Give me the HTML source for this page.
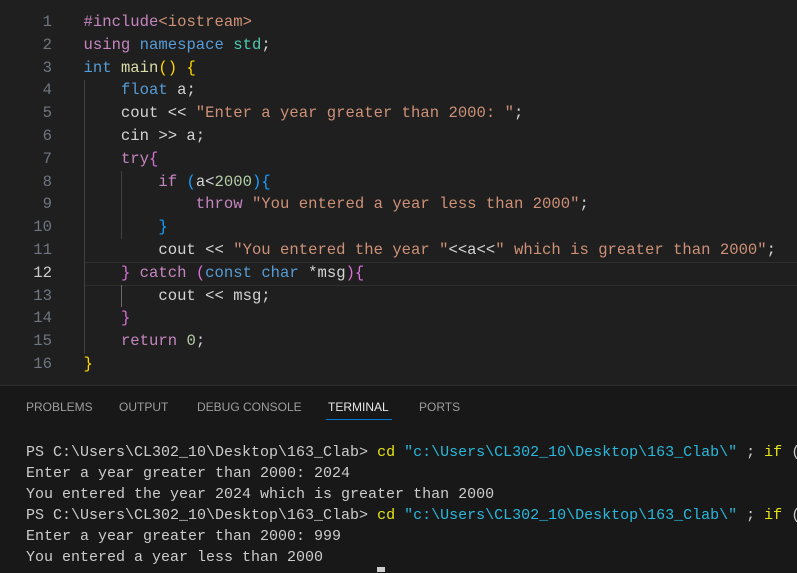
<!DOCTYPE html>
<html><head><style>
body{margin:0;width:797px;height:572px;background:#1f1f1f;overflow:hidden;position:relative;font-family:"Liberation Mono",monospace}
.ln{position:absolute;left:0;width:52px;text-align:right;color:#6e7681;font-size:15.6px;line-height:22.8px}
.code{position:absolute;left:83.5px;font-size:15.6px;line-height:22.8px;color:#d4d4d4;white-space:pre}
.k{color:#c586c0}.b{color:#569cd6}.s{color:#ce9178}.f{color:#dcdcaa}.t{color:#4ec9b0}.n{color:#b5cea8}.v{color:#9cdcfe}
.y{color:#ffd700}.p{color:#da70d6}.bl{color:#179fff}
.hl{position:absolute;left:84px;right:0;top:262px;height:22px;border-top:1px solid #2e2e2e;border-bottom:1px solid #2e2e2e}
.guide{position:absolute;width:1px;background:#404040}
.panel{position:absolute;left:0;top:385px;width:797px;height:187px;background:#181818;border-top:1px solid #2b2b2b}
.tabs{position:absolute;top:400px;font-family:"Liberation Sans",sans-serif;font-size:12px;color:#9d9d9d}
.tabs span{position:absolute;white-space:nowrap}
.term{position:absolute;left:26px;top:442px;font-size:15px;line-height:21px;color:#cccccc;white-space:pre}
.cy{color:#e5e510}.cs{color:#29b8db}
</style></head><body>
<div class="hl"></div>
<div class="guide" style="left:84px;top:80px;height:274px"></div>
<div class="guide" style="left:121px;top:171px;height:68px"></div>
<div class="guide" style="left:121px;top:285px;height:22px;background:#6a6a6a"></div>
<div class="ln" style="top:11px">1<br>2<br>3<br>4<br>5<br>6<br>7<br>8<br>9<br>10<br>11<br><span style="color:#ccc">12</span><br>13<br>14<br>15<br>16</div>
<div class="code" style="top:11px"><span class="k">#include</span><span class="s">&lt;iostream&gt;</span>
<span class="k">using</span> <span class="b">namespace</span> <span class="t">std</span>;
<span class="b">int</span> <span class="f">main</span><span class="y">()</span> <span class="y">{</span>
    <span class="b">float</span> a;
    cout &lt;&lt; <span class="s">"Enter a year greater than 2000: "</span>;
    cin &gt;&gt; a;
    <span class="k">try</span><span class="p">{</span>
        <span class="k">if</span> <span class="bl">(</span>a&lt;<span class="n">2000</span><span class="bl">){</span>
            <span class="k">throw</span> <span class="s">"You entered a year less than 2000"</span>;
        <span class="bl">}</span>
        cout &lt;&lt; <span class="s">"You entered the year "</span>&lt;&lt;a&lt;&lt;<span class="s">" which is greater than 2000"</span>;
    <span class="p">}</span> <span class="k">catch</span> <span class="p">(</span><span class="b">const</span> <span class="b">char</span> *msg<span class="p">){</span>
        cout &lt;&lt; msg;
    <span class="p">}</span>
    <span class="k">return</span> <span class="n">0</span>;
<span class="y">}</span></div>
<div class="panel"></div>
<div class="tabs"><span style="left:26px">PROBLEMS</span><span style="left:119px">OUTPUT</span><span style="left:197px">DEBUG CONSOLE</span><span style="left:328px;color:#e7e7e7">TERMINAL</span><span style="left:419px">PORTS</span></div>
<div style="position:absolute;left:326px;top:419px;width:66px;height:1px;background:#0078d4"></div>
<div class="term">PS C:\Users\CL302_10\Desktop\163_Clab&gt; <span class="cy">cd</span> <span class="cs">"c:\Users\CL302_10\Desktop\163_Clab\"</span> ; <span class="cy">if</span> (
Enter a year greater than 2000: 2024
You entered the year 2024 which is greater than 2000
PS C:\Users\CL302_10\Desktop\163_Clab&gt; <span class="cy">cd</span> <span class="cs">"c:\Users\CL302_10\Desktop\163_Clab\"</span> ; <span class="cy">if</span> (
Enter a year greater than 2000: 999
You entered a year less than 2000</div>
<div style="position:absolute;left:377px;top:567px;width:8px;height:5px;background:#ccc"></div>
</body></html>
